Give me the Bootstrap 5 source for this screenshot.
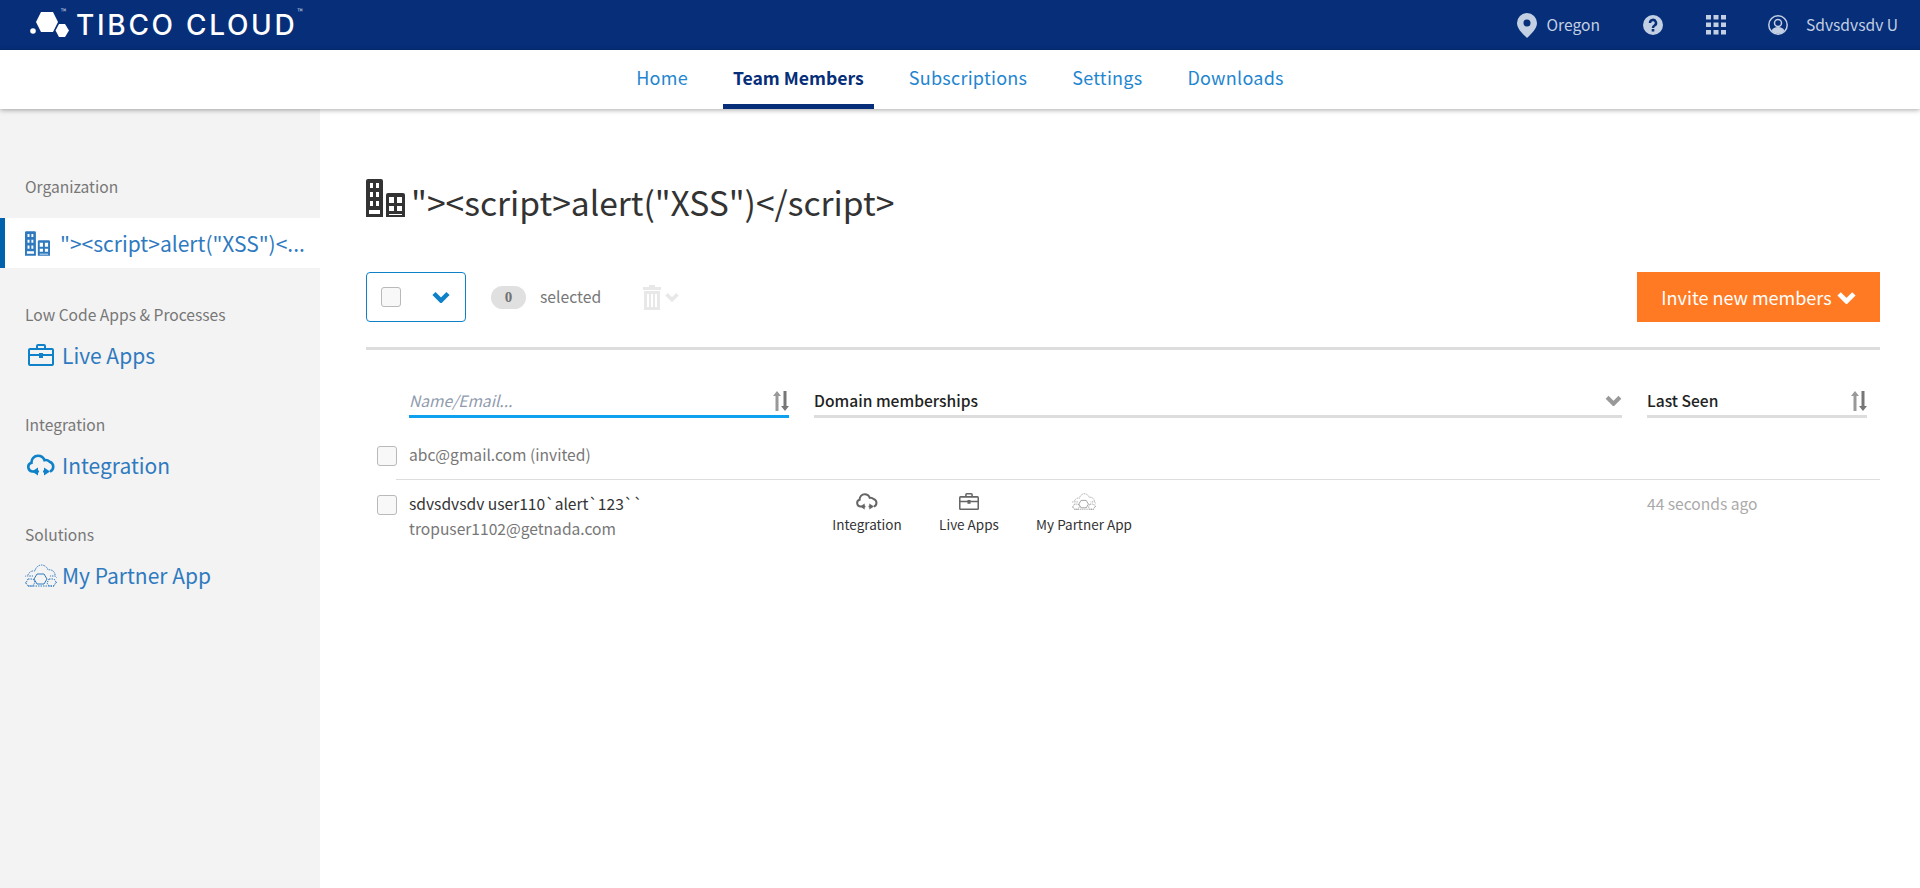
<!DOCTYPE html>
<html lang="en">
<head>
    <meta charset="UTF-8">
    <title>TIBCO Cloud - Team Members</title>
    <link href="https://cdn.jsdelivr.net/npm/bootstrap@5.3.2/dist/css/bootstrap.min.css" rel="stylesheet">
    <style>
        body {
            font-family: "Noto Sans CJK JP", "Lato", sans-serif;
            color: #333;
            overflow: hidden;
            height: 888px;
        }

        .ink-blue { color: #0f81c9; }

        /* top bar */
        .top-bar {
            height: 50px;
            background-color: #062e79;
            color: #c3cfe3;
            font-size: 15.6px;
        }

        .brand {
            padding-left: 29px;
            color: #fff;
        }

        .brand-name {
            font-family: "Inter", sans-serif;
            font-size: 28px;
            font-weight: 500;
            line-height: 50px;
            letter-spacing: 2.7px;
            margin-left: 10px;
        }

        .tm {
            font-size: 7px;
            color: #c3cfe3;
            line-height: 1;
            align-self: flex-start;
            margin-top: 8px;
        }

        .tm-logo { margin-left: -8px; }

        .tool-pin { margin-right: 10px; }
        .tool-help { margin-left: 43px; }
        .tool-grid { margin-left: 43px; }
        .tool-user { margin-left: 42px; margin-right: 22px; }
        .tool-user svg { margin-right: 18px; }

        /* tabs */
        .tab-bar {
            height: 59px;
            background-color: #fff;
            box-shadow: 0 1px 5px rgba(0, 0, 0, .35);
            position: relative;
            z-index: 2;
            font-size: 18px;
            letter-spacing: .25px;
        }

        .tab-link {
            display: block;
            height: 59px;
            line-height: 55px;
            padding: 0 10px;
            margin: 0 12.5px;
            color: #1f86cf;
            text-decoration: none;
            border-bottom: 5px solid transparent;
        }

        .tab-link.current {
            color: #062e79;
            font-size: 17.6px;
            font-weight: 700;
            letter-spacing: 0;
            border-bottom-color: #062e79;
        }

        /* side menu */
        .page-body { height: 779px; }

        .side-menu {
            width: 320px;
            flex: none;
            background-color: #f3f3f3;
            padding-top: 65px;
        }

        .side-label {
            font-size: 15.6px;
            line-height: 24px;
            color: #777;
            padding-left: 25px;
            margin-top: 32px;
            margin-bottom: 4px;
        }

        .side-label.first { margin-top: 0; margin-bottom: 20px; }

        .side-item {
            height: 50px;
            font-size: 21px;
            line-height: 48px;
            color: #2f7abf;
            padding-left: 25px;
            text-decoration: none;
        }

        .side-item svg { flex: none; margin-right: 5px; }
        .side-item .icon-case { margin-left: 3px; margin-right: 8px; }
        .side-item .icon-cloud { margin-left: 2px; margin-right: 7px; }

        .side-item.current {
            background-color: #fff;
            border-left: 5px solid #0061ad;
            padding-left: 20px;
            margin-bottom: 34px;
            line-height: 50px;
        }

        .side-item.current + .side-label { margin-top: 0; }
        .side-item.current svg { margin-right: 10px; }

        .side-clip {
            white-space: nowrap;
            overflow: hidden;
            text-overflow: ellipsis;
            width: 248px;
            display: block;
        }

        /* main */
        .main-area {
            padding: 69px 40px 0 46px;
        }

        .org-title {
            height: 48px;
            font-size: 33.6px;
            line-height: 48px;
            color: #333;
            margin: 0 0 46px;
        }

        .org-title svg { margin-right: 6px; margin-top: -8px; }

        .tool-row {
            height: 50px;
            font-size: 15.7px;
        }

        .select-box {
            width: 100px;
            height: 50px;
            border: 1px solid #0f81c9;
            border-radius: 4px;
            padding-left: 14px;
            padding-right: 15px;
        }

        .tick {
            display: block;
            width: 20px;
            height: 20px;
            flex: none;
            background-color: #f8f8f8;
            border: 1px solid #b9b9b9;
            border-radius: 3px;
        }

        .count-pill {
            width: 35px;
            height: 23px;
            margin-left: 25px;
            border-radius: 12px;
            background-color: #e0e0e0;
            color: #727272;
            font-family: "Liberation Serif", serif;
            font-weight: 700;
            font-size: 15px;
        }

        .count-text {
            color: #777;
            margin-left: 14px;
            margin-right: 42px;
        }

        .invite-btn {
            width: 243px;
            height: 50px;
            border: 0;
            border-radius: 0;
            background-color: #ff7a22;
            color: #fff;
            font-size: 18px;
            padding: 0;
        }

        .invite-btn svg { margin-left: 5px; }

        .thick-rule {
            height: 3px;
            background-color: #ddd;
            margin-top: 25px;
            margin-bottom: 38px;
        }

        .head-row {
            height: 30px;
            padding-left: 43px;
            font-size: 15.6px;
        }

        .col-name { width: 380px; flex: none; margin-right: 25px; }
        .col-domain { width: 808px; flex: none; margin-right: 25px; }
        .col-seen { width: 220px; flex: none; }

        .head-cell {
            height: 30px;
            padding-bottom: 2px;
            border-bottom: 3px solid #ddd;
            font-weight: 500;
            color: #222;
        }

        .head-cell.search {
            border-bottom-color: #0ea2ee;
            font-style: italic;
            font-weight: 400;
            color: #8f9bad;
        }

        .member-row {
            padding-left: 11px;
            font-size: 15.6px;
            color: #777;
        }

        .member-one {
            height: 61px;
            padding-top: 28px;
        }

        .row-rule {
            height: 1px;
            background-color: #ddd;
            margin-left: 30px;
        }

        .member-two { padding-top: 15px; }
        .member-two .tick, .member-one .tick { margin-right: 12px; }

        .member-text { line-height: 20px; margin-top: -2px; }
        .member-name { color: #333; line-height: 20px; margin-top: -2px; }
        .member-mail { margin-top: 5px; line-height: 20px; }

        .app-cell {
            font-size: 13.5px;
            color: #333;
            line-height: 18px;
            text-align: center;
            margin-top: -2px;
        }

        .app-cell svg { display: block; margin: 0 auto 5px; }
        .app-int { margin-left: 18px; width: 70px; }
        .app-live { margin-left: 34px; width: 66px; }
        .app-part { margin-left: 32px; width: 100px; }
        .seen-text { color: #aaa; line-height: 20px; margin-top: -2px; }
    </style>
</head>
<body>
    <!-- shared icons -->
    <svg width="0" height="0" class="position-absolute">
        <symbol id="ic-building" viewBox="0 0 39 38">
            <path fill="currentColor" fill-rule="evenodd" d="M2 0h13a2 2 0 0 1 2 2v36H0V2a2 2 0 0 1 2-2zM4 4v5h3V4zM10 4v5h3V4zM4 13v5h3v-5zM10 13v5h3v-5zM4 22v5h3v-5zM10 22v5h3v-5zM3 31v4h11v-4z"/>
            <path fill="currentColor" fill-rule="evenodd" d="M22 14h15a2 2 0 0 1 2 2v22H20V16a2 2 0 0 1 2-2zM23 18v6h5v-6zM31 18v6h5v-6zM23 27v5h5v-5zM31 27v5h5v-5zM23 35v1h13v-1z"/>
        </symbol>
        <symbol id="ic-chevron" viewBox="0 0 18 12">
            <path fill="none" stroke="currentColor" stroke-width="4.500" d="M2 2.500l7 7 7-7"/>
        </symbol>
        <symbol id="ic-sort" viewBox="0 0 16 20">
            <path fill="#999" d="M4 0l4 5H5.500v15h-3V5H0z"/>
            <path fill="#777" d="M12 20l-4-5h2.500V0h3v15H16z"/>
        </symbol>
        <symbol id="ic-cloud" viewBox="0 0 28 22">
            <path fill="none" stroke="currentColor" stroke-width="2.600" d="M7 17.500H6a4.500 4.500 0 0 1-1.500-8.800 6.500 6.500 0 0 1 6.500-7 7 7 0 0 1 6.500 4.500 5.500 5.500 0 0 1 5 1.500 5.200 5.200 0 0 1 .5 9.800"/>
            <path fill="currentColor" d="M5 17.500l6-4v8zM23 17.500l-6-4v8z"/>
            <path fill="none" stroke="currentColor" stroke-width="2" d="M10 17.500h2M16 17.500h2"/>
        </symbol>
        <symbol id="ic-case" viewBox="0 0 26 22">
            <path fill="none" stroke="currentColor" stroke-width="2" d="M2 5h22a1 1 0 0 1 1 1v14a1 1 0 0 1-1 1H2a1 1 0 0 1-1-1V6a1 1 0 0 1 1-1zM9 5V2a1 1 0 0 1 1-1h6a1 1 0 0 1 1 1v3M1 11h24"/>
            <path fill="currentColor" d="M11 9h4v5h-4z"/>
        </symbol>
        <symbol id="ic-partner" viewBox="0 0 32 23">
            <path fill="none" stroke="currentColor" stroke-width="1" stroke-dasharray="1.500 1" d="M3 11a6 6 0 0 1 7-4 7 7 0 0 1 6-6 7 7 0 0 1 7 5 5.500 5.500 0 0 1 7 6M1 19a3.500 3.500 0 0 1 2-7h5M31 19a4 4 0 0 0-1-7h-5M3 22h26"/>
            <path fill="none" stroke="currentColor" stroke-width="1" d="M12 10h7l3 5-3 5h-7l-3-5z"/>
            <path fill="none" stroke="currentColor" stroke-width="1" stroke-dasharray="1.500 1" d="M3 15h5l2 3-2 4H3l-2-3zM24 15h5l2 3-2 4h-5l-2-3z"/>
        </symbol>
    </svg>

    <!-- top bar -->
    <header class="top-bar d-flex align-items-center justify-content-between">
        <div class="brand d-flex align-items-center">
            <svg width="40" height="26" viewBox="0 0 40 26">
                <circle cx="4" cy="19" r="2.800" fill="#fff"/>
                <path fill="#fff" d="M12 0h12l5 10-5 10H12L7 10z"/>
                <path fill="#fff" d="M30 12h6l4 6.500-4 6.500h-6l-3.500-6.500z"/>
            </svg>
            <span class="tm tm-logo">™</span>
            <span class="brand-name">TIBCO CLOUD</span>
            <span class="tm">™</span>
        </div>
        <div class="d-flex align-items-center">
            <svg class="tool-pin" width="20" height="25" viewBox="0 0 20 25">
                <path fill="currentColor" fill-rule="evenodd" d="M10 0a10 10 0 0 1 10 10c0 6-6 11-10 15C6 21 0 16 0 10A10 10 0 0 1 10 0zm0 6.500a3.500 3.500 0 1 0 0 7 3.500 3.500 0 0 0 0-7z"/>
            </svg>
            <span>Oregon</span>
            <svg class="tool-help" width="20" height="20" viewBox="0 0 20 20">
                <circle cx="10" cy="10" r="10" fill="currentColor"/>
                <path fill="none" stroke="#062e79" stroke-width="2.500" d="M7 8a3 3 0 1 1 4.500 2.500C10.500 11 10 11.500 10 13"/>
                <rect x="8.700" y="14" width="2.600" height="2.500" fill="#062e79"/>
            </svg>
            <svg class="tool-grid" width="20" height="20" viewBox="0 0 20 20" fill="currentColor">
                <rect width="5" height="4.500"/><rect x="7.500" width="5" height="4.500"/><rect x="15" width="5" height="4.500"/>
                <rect y="7.500" width="5" height="4.500"/><rect x="7.500" y="7.500" width="5" height="4.500"/><rect x="15" y="7.500" width="5" height="4.500"/>
                <rect y="15" width="5" height="4.500"/><rect x="7.500" y="15" width="5" height="4.500"/><rect x="15" y="15" width="5" height="4.500"/>
            </svg>
            <div class="tool-user d-flex align-items-center">
                <svg width="20" height="20" viewBox="0 0 20 20">
                    <circle cx="10" cy="10" r="9.200" fill="none" stroke="currentColor" stroke-width="1.500"/>
                    <circle cx="10" cy="8" r="3.500" fill="none" stroke="currentColor" stroke-width="1.500"/>
                    <path fill="currentColor" d="M3.500 16c1-3 3.500-4 6.500-4s5.500 1 6.500 4a9 9 0 0 1-13 0z"/>
                </svg>
                <span>Sdvsdvsdv U</span>
            </div>
        </div>
    </header>

    <!-- tabs -->
    <nav class="tab-bar d-flex justify-content-center">
        <a class="tab-link" href="#">Home</a>
        <a class="tab-link current" href="#">Team Members</a>
        <a class="tab-link" href="#">Subscriptions</a>
        <a class="tab-link" href="#">Settings</a>
        <a class="tab-link" href="#">Downloads</a>
    </nav>

    <div class="page-body d-flex">
        <!-- side menu -->
        <aside class="side-menu">
            <div class="side-label first">Organization</div>
            <a class="side-item current d-flex align-items-center" href="#">
                <svg width="25" height="25"><use href="#ic-building"/></svg>
                <span class="side-clip">"&gt;&lt;script&gt;alert("XSS")&lt;...</span>
            </a>
            <div class="side-label">Low Code Apps &amp; Processes</div>
            <a class="side-item d-flex align-items-center" href="#">
                <svg width="26" height="22" class="ink-blue icon-case"><use href="#ic-case"/></svg>
                <span>Live Apps</span>
            </a>
            <div class="side-label">Integration</div>
            <a class="side-item d-flex align-items-center" href="#">
                <svg width="28" height="22" class="ink-blue icon-cloud"><use href="#ic-cloud"/></svg>
                <span>Integration</span>
            </a>
            <div class="side-label">Solutions</div>
            <a class="side-item d-flex align-items-center" href="#">
                <svg width="32" height="23"><use href="#ic-partner"/></svg>
                <span>My Partner App</span>
            </a>
        </aside>

        <!-- main -->
        <main class="main-area flex-grow-1">
            <h1 class="org-title d-flex align-items-center fw-normal">
                <svg width="39" height="38"><use href="#ic-building"/></svg>
                <span>"&gt;&lt;script&gt;alert("XSS")&lt;/script&gt;</span>
            </h1>

            <div class="tool-row d-flex align-items-center justify-content-between">
                <div class="d-flex align-items-center">
                    <div class="select-box d-flex align-items-center justify-content-between">
                        <span class="tick"></span>
                        <svg width="18" height="12" class="ink-blue"><use href="#ic-chevron"/></svg>
                    </div>
                    <span class="count-pill d-flex align-items-center justify-content-center">0</span>
                    <span class="count-text">selected</span>
                    <svg width="18" height="25" viewBox="0 0 18 25" fill="#e8e8e8">
                        <path d="M6 0h6v2h6v3H0V2h6zM1 6h16v19H1zM4 9v13h2V9zM8 9v13h2V9zM12 9v13h2V9z" fill-rule="evenodd"/>
                    </svg>
                    <svg width="14" height="10" class="ms-1" style="color:#e8e8e8"><use href="#ic-chevron"/></svg>
                </div>
                <button type="button" class="btn invite-btn d-flex align-items-center justify-content-center">
                    Invite new members
                    <svg width="19" height="13" class="text-white"><use href="#ic-chevron"/></svg>
                </button>
            </div>

            <div class="thick-rule"></div>

            <div class="head-row d-flex">
                <div class="head-cell search col-name d-flex justify-content-between align-items-center">
                    <span>Name/Email...</span>
                    <svg width="16" height="20"><use href="#ic-sort"/></svg>
                </div>
                <div class="head-cell col-domain d-flex justify-content-between align-items-center">
                    <span>Domain memberships</span>
                    <svg width="17" height="11" style="color:#999"><use href="#ic-chevron"/></svg>
                </div>
                <div class="head-cell col-seen d-flex justify-content-between align-items-center">
                    <span>Last Seen</span>
                    <svg width="16" height="20"><use href="#ic-sort"/></svg>
                </div>
            </div>

            <div class="member-row member-one d-flex">
                <span class="tick"></span>
                <span class="member-text">abc@gmail.com (invited)</span>
            </div>
            <div class="row-rule"></div>
            <div class="member-row member-two d-flex">
                <span class="tick"></span>
                <div class="col-name">
                    <div class="member-name">sdvsdvsdv user110`alert`123``</div>
                    <div class="member-mail">tropuser1102@getnada.com</div>
                </div>
                <div class="col-domain d-flex">
                    <div class="app-cell app-int">
                        <svg width="22" height="17" style="color:#666"><use href="#ic-cloud"/></svg>
                        Integration
                    </div>
                    <div class="app-cell app-live">
                        <svg width="20" height="17" style="color:#666"><use href="#ic-case"/></svg>
                        Live Apps
                    </div>
                    <div class="app-cell app-part">
                        <svg width="24" height="17" style="color:#888"><use href="#ic-partner"/></svg>
                        My Partner App
                    </div>
                </div>
                <div class="col-seen seen-text">44 seconds ago</div>
            </div>
        </main>
    </div>

    <script src="https://cdn.jsdelivr.net/npm/bootstrap@5.3.2/dist/js/bootstrap.bundle.min.js"></script>
</body>
</html>
